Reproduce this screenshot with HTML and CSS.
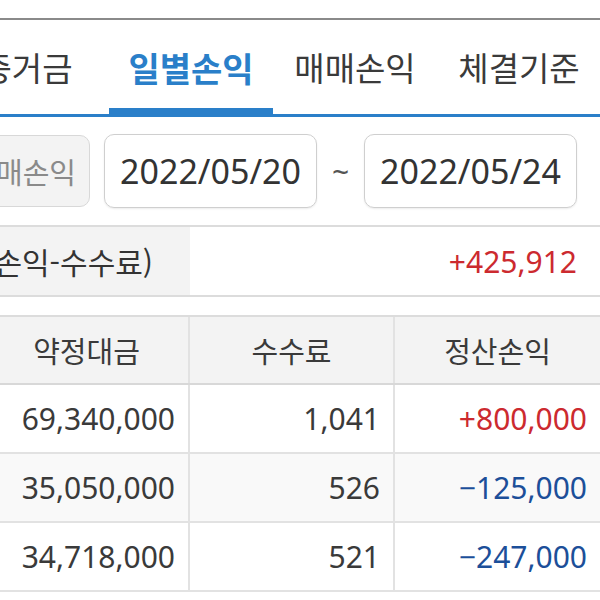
FILE: index.html
```html
<!DOCTYPE html>
<html lang="ko">
<head>
<meta charset="utf-8">
<link rel="stylesheet" href="styles.css">
</head>
<body>
<div class="page">
  <div class="topbar"></div>
  <nav class="tabs">
    <div class="tab">증거금</div>
    <div class="tab active">일별손익</div>
    <div class="tab">매매손익</div>
    <div class="tab">체결기준</div>
  </nav>
  <div class="daterow">
    <div class="typebtn">매매손익</div>
    <div class="datebox">2022/05/20</div>
    <div class="tilde">~</div>
    <div class="datebox">2022/05/24</div>
  </div>
  <div class="summary">
    <div class="sumlabel">정산손익(매매손익-수수료)</div>
    <div class="sumvalue plus">+425,912</div>
  </div>
  <div class="table">
    <div class="row head">
      <div class="cell">약정대금</div>
      <div class="cell">수수료</div>
      <div class="cell">정산손익</div>
    </div>
    <div class="row">
      <div class="cell num">69,340,000</div>
      <div class="cell num">1,041</div>
      <div class="cell num plus">+800,000</div>
    </div>
    <div class="row alt">
      <div class="cell num">35,050,000</div>
      <div class="cell num">526</div>
      <div class="cell num minus">&minus;125,000</div>
    </div>
    <div class="row">
      <div class="cell num">34,718,000</div>
      <div class="cell num">521</div>
      <div class="cell num minus">&minus;247,000</div>
    </div>
  </div>
</div>
</body>
</html>
```
FILE: styles.css
```css
html, body {
  margin: 0;
  padding: 0;
  background: #fff;
  overflow: hidden;
}
body {
  width: 600px;
  height: 600px;
  font-family: "Noto Sans", "Noto Sans CJK KR", sans-serif;
  color: #333;
}
.page {
  width: 600px;
}
.topbar {
  height: 18px;
  border-bottom: 2px solid #8a8a8a;
}
.tabs {
  display: flex;
  margin-left: -55px;
  width: 656px;
  border-bottom: 3px solid #2a7fc9;
}
.tab {
  width: 164px;
  height: 94px;
  display: flex;
  align-items: center;
  justify-content: center;
  font-family: "Noto Sans CJK KR", sans-serif;
  font-size: 33px;
  color: #3a3a3a;
  white-space: nowrap;
}
.tab.active {
  color: #2a7fc9;
  font-weight: 700;
  font-size: 34px;
  box-shadow: inset 0 -6px 0 #2a7fc9;
}
.daterow {
  display: flex;
  justify-content: flex-end;
  align-items: center;
  height: 74px;
  margin-top: 17px;
  padding-right: 23px;
}
.typebtn {
  flex: none;
  width: 150px;
  height: 72px;
  margin-right: 14px;
  border: 1px solid #d8d8d8;
  border-radius: 10px;
  background: #f3f3f3;
  color: #8a8a8a;
  font-family: "Noto Sans CJK KR", sans-serif;
  font-size: 29px;
  display: flex;
  align-items: center;
  justify-content: flex-end;
  padding-right: 13px;
  box-sizing: border-box;
  white-space: nowrap;
}
.datebox {
  flex: none;
  width: 213px;
  height: 74px;
  box-sizing: border-box;
  border: 1px solid #cfcfcf;
  border-radius: 10px;
  box-shadow: 0 1px 2px rgba(0,0,0,0.08);
  display: flex;
  align-items: center;
  justify-content: center;
  font-size: 34px;
  color: #333;
}
.tilde {
  flex: none;
  width: 47px;
  text-align: center;
  font-size: 30px;
  color: #555;
}
.summary {
  display: flex;
  margin-top: 17px;
  height: 72px;
  box-sizing: border-box;
  border-top: 2px solid #dcdcdc;
  border-bottom: 2px solid #dcdcdc;
}
.sumlabel {
  width: 190px;
  flex: none;
  background: #f3f3f3;
  display: flex;
  align-items: center;
  justify-content: flex-end;
  padding-right: 37px;
  box-sizing: border-box;
  white-space: nowrap;
  overflow: hidden;
  font-family: "Noto Sans CJK KR", sans-serif;
  font-size: 30px;
  color: #333;
}
.sumvalue {
  flex: 1;
  display: flex;
  align-items: center;
  justify-content: flex-end;
  padding-right: 23px;
  font-size: 30px;
}
.plus { color: #cc2a2f; }
.minus { color: #1c4f99; }
.table {
  margin-top: 18px;
  margin-left: -15px;
  width: 615px;
  border-top: 2px solid #dcdcdc;
}
.row {
  display: grid;
  grid-template-columns: 205px 205px 205px;
  height: 69px;
  border-bottom: 2px solid #e2e2e2;
  box-sizing: border-box;
}
.row.head {
  height: 68px;
  background: #f3f3f3;
  border-bottom-color: #d8d8d8;
}
.row.alt {
  background: #f9f9f9;
}
.cell {
  display: flex;
  align-items: center;
  justify-content: center;
  border-right: 2px solid #e2e2e2;
  font-family: "Noto Sans CJK KR", sans-serif;
  font-size: 29px;
  color: #3a3a3a;
}
.cell:last-child {
  border-right: none;
}
.cell.num {
  justify-content: flex-end;
  padding-right: 13px;
  font-family: "Noto Sans", sans-serif;
  font-size: 30px;
}
.cell.num.plus { color: #cc2a2f; }
.cell.num.minus { color: #1c4f99; }
```
